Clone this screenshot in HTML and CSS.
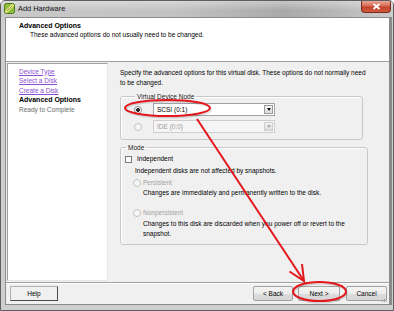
FILE: index.html
```html
<!DOCTYPE html>
<html lang="en">
<head>
    <meta charset="UTF-8">
    <title>Add Hardware</title>
    <link rel="stylesheet" href="styles.css">
</head>
<body>
    <div class="window">
        <header class="titlebar">
            <svg class="app-icon" width="11" height="11" viewBox="0 0 11 11">
                <rect x="0.5" y="0.5" width="10" height="10" rx="2" fill="#8dbf3c" stroke="#4f7a1c"/>
                <path d="M2.5 8.5 L8.5 2.5" stroke="#f4ec8a" stroke-width="2.6" stroke-linecap="round"/>
                <path d="M2.8 8.2 L8.2 2.8" stroke="#6b7a22" stroke-width="0.8"/>
            </svg>
            <span class="title">Add Hardware</span>
            <button class="close" aria-label="Close">
                <svg width="9" height="7" viewBox="0 0 9 7">
                    <path d="M1.5 1 L7.5 6 M7.5 1 L1.5 6" stroke="#fff" stroke-width="1.8"/>
                </svg>
            </button>
        </header>

        <div class="client">
            <div class="wizard-header">
                <h1>Advanced Options</h1>
                <p>These advanced options do not usually need to be changed.</p>
            </div>

            <div class="wizard-main">
                <nav class="steps">
                    <a href="#">Device Type</a>
                    <a href="#">Select a Disk</a>
                    <a href="#">Create a Disk</a>
                    <span class="current">Advanced Options</span>
                    <span class="pending">Ready to Complete</span>
                </nav>

                <section class="options">
                    <p class="intro">Specify the advanced options for this virtual disk. These options do not normally need<br>to be changed.</p>

                    <fieldset class="group node-group">
                        <legend>Virtual Device Node</legend>
                        <div class="node-row">
                            <span class="radio checked"></span>
                            <div class="combo"><span>SCSI (0:1)</span><span class="combo-btn"></span></div>
                        </div>
                        <div class="node-row">
                            <span class="radio disabled"></span>
                            <div class="combo disabled"><span>IDE (0:0)</span><span class="combo-btn"></span></div>
                        </div>
                    </fieldset>

                    <fieldset class="group mode-group">
                        <legend>Mode</legend>
                        <div class="check-row"><span class="checkbox"></span>Independent</div>
                        <p class="note">Independent disks are not affected by snapshots.</p>
                        <div class="radio-row"><span class="radio disabled"></span>Persistent</div>
                        <p class="note sub">Changes are immediately and permanently written to the disk.</p>
                        <div class="radio-row nonpersistent"><span class="radio disabled"></span>Nonpersistent</div>
                        <p class="note sub last">Changes to this disk are discarded when you power off or revert to the<br>snapshot.</p>
                    </fieldset>
                </section>
            </div>

            <footer class="wizard-footer">
                <button class="btn help">Help</button>
                <div class="nav-buttons">
                    <button class="btn back">&lt; Back</button>
                    <button class="btn next">Next &gt;</button>
                    <button class="btn cancel">Cancel</button>
                </div>
            </footer>
        </div>

        <!-- red markup drawn over the dialog -->
        <svg class="annotations" width="394" height="311" viewBox="0 0 394 311">
            <g fill="#9a9a9a">
                <rect x="386" y="297" width="1" height="1"/>
                <rect x="384" y="299" width="1" height="1"/>
                <rect x="386" y="299" width="1" height="1"/>
                <rect x="382" y="301" width="1" height="1"/>
                <rect x="384" y="301" width="1" height="1"/>
                <rect x="386" y="301" width="1" height="1"/>
            </g>
            <g fill="none" stroke="#000" stroke-opacity="0.12" stroke-width="2">
                <ellipse cx="168.5" cy="109.5" rx="42.5" ry="8"/>
                <ellipse cx="320.5" cy="293" rx="26.5" ry="9.5"/>
            </g>
            <g fill="none" stroke="#e3161b" stroke-width="2">
                <ellipse cx="167.5" cy="108" rx="42.5" ry="8"/>
                <path d="M197 119 L304 281"/>
                <path d="M289.5 271.5 L304 281 L302 264"/>
                <ellipse cx="319.5" cy="291.5" rx="26.5" ry="9.5"/>
            </g>
        </svg>
    </div>
</body>
</html>
```

FILE: styles.css
```css
/* Global styles */
body {
    margin: 0;
    font-family: 'Liberation Sans', Arial, sans-serif;
    font-size: 6.5px;
    color: #000;
    background: #fff;
}

p, h1 {
    margin: 0;
}

/* Window frame */
.window {
    position: relative;
    width: 394px;
    height: 311px;
    box-sizing: border-box;
    border: 1px solid #5f5f5f;
    border-radius: 5px 5px 0 0;
    background: #cfcfcf;
    display: flex;
    flex-direction: column;
    overflow: hidden;
}

.titlebar {
    height: 16px;
    display: flex;
    align-items: flex-start;
    padding-left: 3px;
    background:
        linear-gradient(180deg, rgba(255, 255, 255, 0.35), rgba(255, 255, 255, 0) 60%),
        linear-gradient(90deg, #c9c9c9 0%, #c2c2c2 45%, #a9a9a9 72%, #b6b6b6 85%, #cdcdcd 100%);
}

.app-icon {
    margin-top: 2px;
}

.title {
    margin-left: 3px;
    margin-top: 3px;
    font-size: 7.4px;
    line-height: 9px;
    color: #111;
}

.close {
    margin-left: auto;
    margin-right: 2px;
    width: 30px;
    height: 12px;
    padding: 0;
    border: 1px solid #7c2a1f;
    border-top: 0;
    border-radius: 0 0 4px 4px;
    background: linear-gradient(180deg, #e9a795 0%, #d86a52 45%, #c2422d 55%, #cf5a40 100%);
    display: flex;
    align-items: center;
    justify-content: center;
}

/* Client area */
.client {
    height: 288px;
    box-sizing: border-box;
    margin: 0 1px 5px 4px;
    border: 1px solid #8b8b8b;
    border-right: 3px solid #8a8a8a;
    background: #f0f0f0;
    display: flex;
    flex-direction: column;
}

.wizard-header {
    height: 40px;
    background: #fff;
    border-bottom: 1px solid #a0a0a0;
    padding: 3px 0 0 13px;
}

.wizard-header h1 {
    font-size: 7px;
    line-height: 9px;
    font-weight: bold;
}

.wizard-header p {
    margin-left: 11px;
    line-height: 9px;
}

.wizard-main {
    height: 221px;
    display: flex;
    align-items: flex-start;
    padding: 1px 0 0 1px;
    box-sizing: border-box;
    border-bottom: 1px solid #a0a0a0;
}

/* Step list */
.steps {
    width: 101px;
    height: 218px;
    box-sizing: border-box;
    background: #fff;
    border: 1px solid;
    border-color: #a0a0a0 #e6e6e6 #e6e6e6 #a0a0a0;
    padding: 2.5px 0 0 11px;
    display: flex;
    flex-direction: column;
    line-height: 9.5px;
}

.steps a {
    color: #8a4fd0;
    text-decoration: underline;
    align-self: flex-start;
}

.steps .current {
    font-weight: bold;
    font-size: 7px;
}

.steps .pending {
    color: #6d6d6d;
}

/* Options column */
.options {
    margin-left: 12px;
    padding-top: 5px;
}

.intro {
    line-height: 10px;
}

.group {
    margin: 0;
    padding: 0;
    border: 1px solid #c8c8c8;
    border-radius: 3px;
    box-shadow: inset 1px 1px 0 #fff;
}

.group legend {
    margin-left: 1px;
    padding: 0 2px;
    line-height: 9px;
    color: #1a1a1a;
}

.node-group {
    width: 243px;
    box-sizing: border-box;
    margin-top: 4px;
    padding: 2px 0 6px 13px;
}

.node-row {
    display: flex;
    align-items: center;
    height: 13px;
}

.node-row + .node-row {
    margin-top: 4px;
}

.radio {
    width: 8px;
    height: 8px;
    box-sizing: border-box;
    border-radius: 50%;
    border: 1px solid #8e8f8f;
    background: radial-gradient(circle at 40% 40%, #fff, #e4e4e4);
    flex: none;
}

.radio.checked {
    background: radial-gradient(circle, #2a2a2a 0 1.6px, #fff 2.2px, #e4e4e4);
}

.radio.disabled {
    border-color: #c2c2c2;
    background: #f6f6f6;
}

.combo {
    margin-left: 11px;
    width: 122px;
    height: 13px;
    box-sizing: border-box;
    border: 1px solid #9fa2a8;
    background: #fff;
    display: flex;
    align-items: center;
    justify-content: space-between;
    padding: 0 1px 0 3px;
}

.combo-btn {
    width: 9px;
    height: 9px;
    box-sizing: border-box;
    border: 1px solid #9a9a9a;
    background: linear-gradient(#f6f6f6, #dcdcdc);
    display: flex;
    align-items: center;
    justify-content: center;
}

.combo-btn::after {
    content: "";
    border-left: 2.5px solid transparent;
    border-right: 2.5px solid transparent;
    border-top: 3px solid #111;
}

.combo.disabled {
    color: #9d9d9d;
    border-color: #cfcfcf;
    background: #f5f5f5;
}

.combo.disabled .combo-btn {
    border-color: #cfcfcf;
}

.combo.disabled .combo-btn::after {
    border-top-color: #a9a9a9;
}

/* Mode group */
.mode-group {
    width: 248px;
    box-sizing: border-box;
    margin-top: 3px;
    padding: 0 4px 6px 4px;
}

.check-row,
.radio-row {
    display: flex;
    align-items: center;
    line-height: 10px;
}

.check-row {
    margin-top: 2px;
}

.checkbox {
    width: 7px;
    height: 7px;
    box-sizing: border-box;
    border: 1px solid #7a7a7a;
    background: #fff;
    margin-right: 5px;
}

.radio-row {
    margin-top: 2px;
    margin-left: 8px;
    color: #a3a3a3;
}

.radio-row .radio {
    margin-right: 2px;
}

.radio-row.nonpersistent {
    margin-top: 10px;
}

.note {
    margin-top: 2px;
    margin-left: 10px;
    line-height: 10px;
}

.note.sub {
    margin-top: 0;
    margin-left: 18px;
}

.note.last {
    margin-top: 1px;
    line-height: 9.5px;
}

/* Footer buttons */
.wizard-footer {
    flex: 1;
    border-top: 1px solid #fff;
    display: flex;
    align-items: flex-start;
    padding: 2px 2px 0 4px;
}

.btn {
    height: 15px;
    padding: 0;
    font-family: 'Liberation Sans', Arial, sans-serif;
    font-size: 6.5px;
    color: #000;
    border: 1px solid #a3a3a3;
    border-radius: 2px;
    background: linear-gradient(180deg, #f4f4f4 0%, #ececec 50%, #dddddd 51%, #d6d6d6 100%);
}

.help {
    width: 48px;
    border-color: #b0b0b0 #4a4a4a #4a4a4a #b0b0b0;
    border-radius: 0;
    background: #f0f0f0;
}

.nav-buttons {
    margin-left: auto;
    display: flex;
}

.back {
    width: 40px;
}

.next {
    width: 42px;
    margin-left: 5px;
}

.cancel {
    width: 41px;
    margin-left: 6px;
}

/* Annotation overlay */
.annotations {
    position: absolute;
    top: -1px;
    left: -1px;
    pointer-events: none;
}
```
